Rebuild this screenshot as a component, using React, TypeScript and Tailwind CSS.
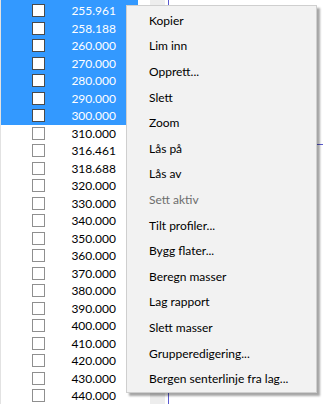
import React from "react";

const values = [
  "255.961", "258.188", "260.000", "270.000", "280.000", "290.000", "300.000",
  "310.000", "316.461", "318.688", "320.000", "330.000", "340.000", "350.000",
  "360.000", "370.000", "380.000", "390.000", "400.000", "410.000", "420.000",
  "430.000", "440.000",
];

const menu: { label: string; disabled?: boolean }[] = [
  { label: "Kopier" },
  { label: "Lim inn" },
  { label: "Opprett..." },
  { label: "Slett" },
  { label: "Zoom" },
  { label: "Lås på" },
  { label: "Lås av" },
  { label: "Sett aktiv", disabled: true },
  { label: "Tilt profiler..." },
  { label: "Bygg flater..." },
  { label: "Beregn masser" },
  { label: "Lag rapport" },
  { label: "Slett masser" },
  { label: "Grupperedigering..." },
  { label: "Bergen senterlinje fra lag..." },
];

export default function App() {
  return (
    <div
      className="relative w-[323px] h-[404px] overflow-hidden bg-white flex"
      style={{ fontFamily: "Lato, 'Noto Sans', sans-serif" }}
    >
      {/* list */}
      <div className="w-[138px] h-full border-l border-[#e2e2e2] flex flex-col">
        <div className="h-[2.25px] bg-[#3399ff] shrink-0" />
        {values.map((v, i) => {
          const sel = i < 7;
          return (
            <div
              key={v}
              className={`h-[17.5px] shrink-0 flex items-center ${sel ? "bg-[#3399ff] text-white" : "text-black"}`}
            >
              <div
                className={`ml-[31px] mb-px w-[13px] h-[13px] bg-white border ${sel ? "border-[#4a4a4a]" : "border-[#8f8f8f]"}`}
              />
              <div className="w-[71px] text-right text-[12px] leading-none">{v}</div>
            </div>
          );
        })}
      </div>
      <div className="w-[12px] h-full" />
      <div className="w-[15px] h-full bg-[#ededed]" />
      <div className="w-[3px] h-full" />
      <div className="w-px h-full bg-[#5a5ad0]" />
      <div className="flex-1 h-full flex flex-col">
        <div className="h-[144px]" />
        <div className="h-px bg-[#5a5ad0]" />
      </div>

      {/* context menu */}
      <div className="absolute left-[126px] top-[5px] w-[191px] bg-[#f2f2f2] border border-[#cfcfcf] shadow-[3px_3px_2px_rgba(0,0,0,0.35)] pt-[2px]">
        {menu.map((m) => (
          <div
            key={m.label}
            className={`h-[25.6px] flex items-center pl-[22px] text-[12px] leading-none ${m.disabled ? "text-[#6d6d6d]" : "text-black"}`}
          >
            {m.label}
          </div>
        ))}
      </div>
    </div>
  );
}
